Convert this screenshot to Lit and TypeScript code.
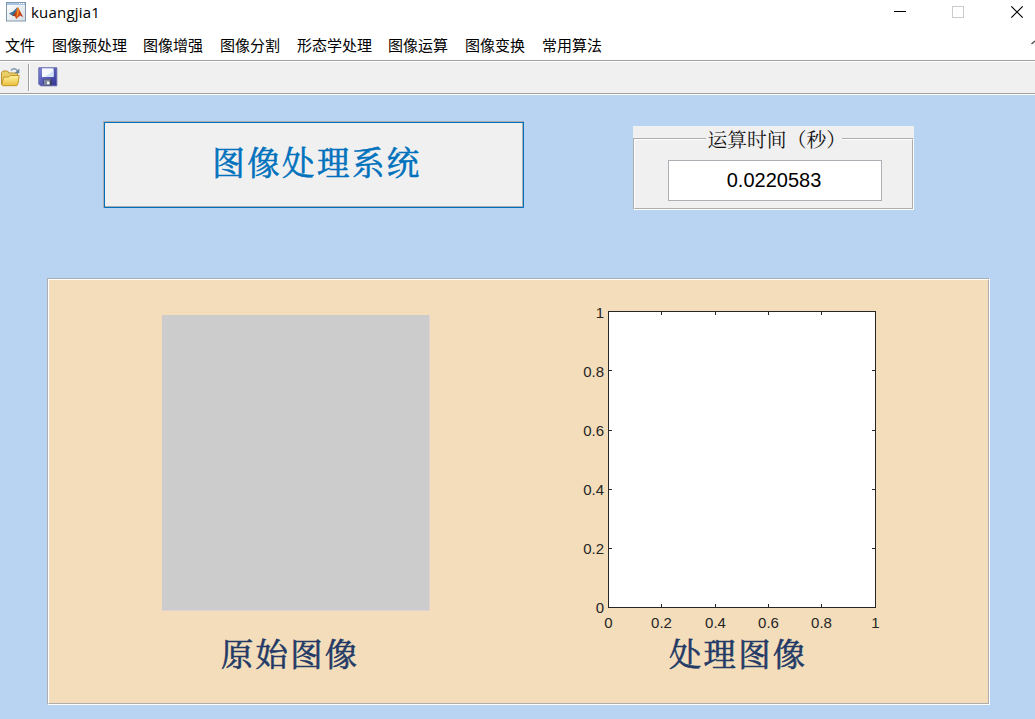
import { LitElement, html, css, svg } from "lit";
import { customElement, property } from "lit/decorators.js";

const MENUS = ["文件", "图像预处理", "图像增强", "图像分割", "形态学处理", "图像运算", "图像变换", "常用算法"];

@customElement("title-bar")
class TitleBar extends LitElement {
  static styles = css`
    :host { display: flex; height: 28px; background: #fff; align-items: flex-start; }
    .logo { margin: 2px 0 0 6px; width: 20px; height: 20px; flex: none; }
    .name { margin-left: 5px; font: 15px/25px "Open Sans", "Noto Sans", sans-serif; letter-spacing: 0.2px; flex: 1; color: #000; }
    .buttons { flex: none; width: 141px; height: 26px; }
  `;
  render() {
    return html`
      <svg class="logo" viewBox="0 0 20 20">
        <defs>
          <linearGradient id="tile" x1="0" y1="0" x2="1" y2="1"><stop offset="0" stop-color="#fff"/><stop offset="1" stop-color="#d5dde2"/></linearGradient>
          <linearGradient id="peak"><stop offset="0" stop-color="#7c1d12"/><stop offset=".45" stop-color="#e05a1c"/><stop offset="1" stop-color="#b02a16"/></linearGradient>
        </defs>
        <rect x=".5" y=".5" width="19" height="18.5" fill="url(#tile)" stroke="#8198ad"/>
        <path d="M1 1h18v2H1z" fill="#a7c5e2"/>
        <path d="M13 1.5h1M15 1.5h1M17 1.5h1" stroke="#fff"/>
        <path d="M3 11.5 7 9.5 11.5 5 10 11 7 14z" fill="#3a7196"/>
        <path d="M6.5 13.8 9 11 12 5l2 4 3.2 6.2-3-1.600-4 3.400-1.2-2.8z" fill="url(#peak)"/>
        <path d="M12 5 13 9l-1 4-1.5 2 .6-5z" fill="#ef922c"/>
      </svg>
      <span class="name">kuangjia1</span>
      <svg class="buttons" viewBox="0 0 141 26" fill="none" shape-rendering="crispEdges">
        <path d="M0 11.5h12" stroke="#000"/>
        <rect x="58.5" y="6.5" width="11" height="11" stroke="#ccc"/>
        <path d="m117.3 6.3 11.4 11.4m0-11.4-11.4 11.4" stroke="#000" shape-rendering="auto" stroke-width="1.2"/>
      </svg>`;
  }
}

@customElement("menu-bar")
class MenuBar extends LitElement {
  static styles = css`
    :host { display: flex; height: 32px; background: #fff; padding-left: 5px; gap: 17px; align-items: center;
      font: 15px/32px "Noto Sans CJK SC", sans-serif; color: #000; }
    .item { white-space: nowrap; padding-top: 1px; }
    .item:nth-child(3), .item:nth-child(6) { margin-left: -1px; }
    .more { margin-left: auto; width: 4px; height: 8px; }
  `;
  render() {
    return html`${MENUS.map((m) => html`<span class="item">${m}</span>`)}
      <svg class="more" viewBox="0 0 4 8"><path d="M.5 4 4 1" stroke="#555" stroke-width="1.5" fill="none"/></svg>`;
  }
}

@customElement("tool-bar")
class ToolBar extends LitElement {
  static styles = css`
    :host { display: flex; box-sizing: border-box; height: 35px; background: #f0f0f0; border-top: 1px solid #a0a0a0;
      border-bottom: 1px solid #fff; box-shadow: inset 0 1px #fff, inset 0 -1px #a0a0a0; align-items: flex-start; }
    .open { width: 20px; height: 20px; margin: 6px 8px 0 0; }
    .rule { width: 1px; height: 27px; margin-top: 3px; background: #a0a0a0; border-right: 1px solid #fff; margin-right: 8px; }
    .save { width: 20px; height: 20px; margin-top: 6px; }
  `;
  render() {
    return html`
      <svg class="open" viewBox="0 0 20 20">
        <defs><linearGradient id="f" x1="0" y1="0" x2="0" y2="1"><stop offset="0" stop-color="#fff3a0"/><stop offset="1" stop-color="#e9bd3c"/></linearGradient></defs>
        <path d="M1.500 17.500V5.500L3 4h4.500l1.500 2h8.500v4" fill="#e9cf68" stroke="#bd9330"/>
        <path d="M1.700 17.500 3.600 10h5.200l1.400-1.500h9l-1.300 8.500-1.200 1.700H2.600z" fill="url(#f)" stroke="#c39427"/>
        <path d="M11 3.500Q14 .2 17.300 3.500" fill="none" stroke="#7d98b0" stroke-width="1.500"/>
        <path d="M19.300 1.600v4.600h-4.800z" fill="#66849e"/>
      </svg>
      <span class="rule"></span>
      <svg class="save" viewBox="0 0 20 20">
        <defs><linearGradient id="s" x1="0" y1="0" x2="1" y2="1"><stop offset="0" stop-color="#7e88dc"/><stop offset="1" stop-color="#303092"/></linearGradient></defs>
        <path d="M.8 .8h18v18H2.500L.8 17.100z" fill="url(#s)" stroke="#6367a9"/>
        <path d="M4 1.300h11.500v8.700H4z" fill="#f6faff"/>
        <path d="m15.500 3.500v6.500h-9z" fill="#d4e2f5"/>
        <path d="M5.500 12h8.500v6.300H5.500z" fill="#3a4062"/>
        <path d="M6 12.500h7.500L10 15 8.500 18H6z" fill="#8088a0"/>
        <path d="M9 14.500h2.700v3H9z" fill="#f5f5f5"/>
      </svg>`;
  }
}

@customElement("plot-axes")
class PlotAxes extends LitElement {
  static styles = css`
    :host { display: block; width: 310px; height: 330px; }
    .plot { display: block; }
    .label { font: 15px "Liberation Sans", Arial, sans-serif; fill: #262626; }
  `;
  render() {
    const labels = ["0", "0.2", "0.4", "0.6", "0.8", "1"];
    const xs = [28.5, 81.5, 135.5, 188.5, 241.5, 295.5];
    const ys = [306.5, 247.5, 188.5, 129.5, 69.5, 10.5];
    const baselines = [312, 253, 194, 135, 76, 17];
    return html`<svg class="plot" width="310" height="330">
      <rect x="28.5" y="10.5" width="267" height="296" fill="#fff" stroke="#262626" shape-rendering="crispEdges"/>
      ${xs.slice(1, 5).map((x) => svg`<path d="M${x} 11v3M${x} 306v-3" stroke="#262626"/>`)}
      ${ys.slice(1, 5).map((y) => svg`<path d="M29 ${y}h3M295 ${y}h-3" stroke="#262626"/>`)}
      ${labels.map((t, i) => svg`
        <text class="label" x=${xs[i]} y="327" text-anchor="middle">${t}</text>
        <text class="label" x="24" y=${baselines[i]} text-anchor="end">${t}</text>`)}
    </svg>`;
  }
}

@customElement("etched-frame")
class EtchedFrame extends LitElement {
  static styles = css`
    :host { display: block; box-sizing: border-box; border: 1px solid; border-color: #adadad #fff #fff #adadad; }
    .inner { box-sizing: border-box; height: 100%; border: 1px solid; border-color: #fff #adadad #adadad #fff; }
  `;
  render() {
    return html`<div class="inner"><slot></slot></div>`;
  }
}

@customElement("app-root")
class AppRoot extends LitElement {
  @property() elapsed = "0.0220583";

  static styles = css`
    :host { display: flex; flex-direction: column; height: 719px; overflow: hidden; background: #b9d4f3; }
    .head { display: flex; align-items: flex-start; height: 183px; flex: none; padding: 26px 0 0 103px; box-sizing: border-box; }
    .system { box-sizing: border-box; width: 421px; height: 87px; border: 0; padding: 0; display: flex;
      background: #f0f0f0; box-shadow: inset 1px 1px #adadad; }
    .face { flex: 1; margin: 1px 0 0 1px; border: 1px solid #0072bd; box-shadow: inset -1px -1px #adadad; height: 84px;
      font: 32.5px/76px "Noto Serif CJK SC", "Noto Sans CJK SC", serif; letter-spacing: 2.4px; text-align: center; color: #0072bd; padding-left: 6px;
      box-sizing: content-box; -webkit-text-stroke: 0.6px #0072bd; }
    .timer { display: flex; flex-direction: column; width: 281px; height: 84px; margin: 5px 0 0 109px; background: #f0f0f0; }
    .timer etched-frame { margin-top: 12px; height: 72px; }
    .legend { box-sizing: border-box; width: 136px; height: 24px; margin: -14px auto 0; padding-left: 2px; background: #f0f0f0; text-align: left;
      font: 19.8px/26px "Noto Serif CJK SC", "Noto Sans CJK SC", serif; white-space: nowrap; color: #111; }
    .value { box-sizing: border-box; width: 214px; height: 41px; margin: 10px 0 0 33px; border: 1px solid #adadb3; background: #fff;
      font: 20px/39px "Liberation Sans", Arial, sans-serif; text-align: center; padding-right: 2px; color: #000; }
    .board { margin-left: 47px; width: 943px; height: 427px; flex: none; background: #f3ddbb; }
    .views { display: flex; align-items: flex-start; }
    .source { width: 268px; height: 296px; margin: 35px 0 0 113px; background: #ccc; box-shadow: inset -1px -1px #e3cfd4; }
    plot-axes { margin: 21px 0 0 150px; }
    .captions { display: flex; margin-top: 4px; font: 32.3px/34px "Noto Serif CJK SC", "Noto Sans CJK SC", serif; letter-spacing: 2.3px; color: #233a66;
      -webkit-text-stroke: 0.6px #233a66; }
    .left { margin-left: 172px; width: 448px; }
  `;
  render() {
    return html`
      <title-bar></title-bar>
      <menu-bar></menu-bar>
      <tool-bar></tool-bar>
      <div class="head">
        <button class="system"><span class="face">图像处理系统</span></button>
        <div class="timer">
          <etched-frame>
            <div class="legend">运算时间（秒）</div>
            <div class="value">${this.elapsed}</div>
          </etched-frame>
        </div>
      </div>
      <etched-frame class="board">
        <div class="views"><div class="source"></div><plot-axes></plot-axes></div>
        <div class="captions"><span class="left">原始图像</span><span>处理图像</span></div>
      </etched-frame>`;
  }
}
